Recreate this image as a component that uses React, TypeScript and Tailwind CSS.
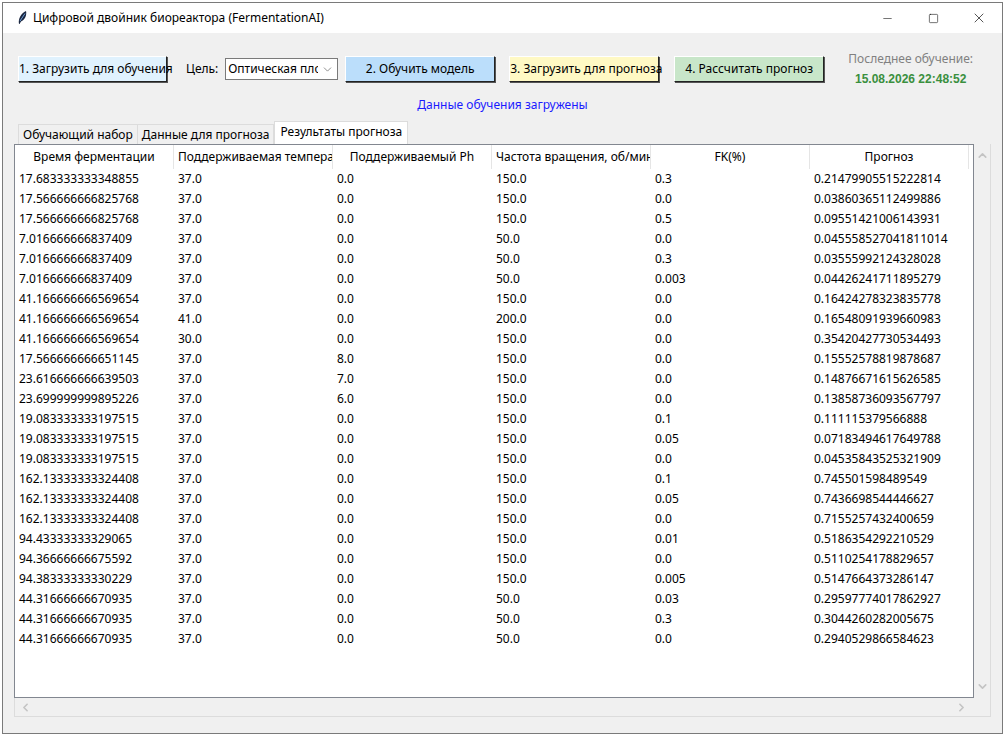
import { ChevronDown, ChevronLeft, ChevronRight, ChevronUp, Minus, Square, X } from "lucide-react";

const columns = [
  { title: "Время ферментации", pad: "justify-center" },
  { title: "Поддерживаемая температура", pad: "justify-start pl-[4px]" },
  { title: "Поддерживаемый Ph", pad: "justify-center" },
  { title: "Частота вращения, об/мин", pad: "justify-start pl-[4px]" },
  { title: "FK(%)", pad: "justify-center" },
  { title: "Прогноз", pad: "justify-center" },
];

const rows = [
  ["17.683333333348855", "37.0", "0.0", "150.0", "0.3", "0.21479905515222814"],
  ["17.566666666825768", "37.0", "0.0", "150.0", "0.0", "0.03860365112499886"],
  ["17.566666666825768", "37.0", "0.0", "150.0", "0.5", "0.09551421006143931"],
  ["7.016666666837409", "37.0", "0.0", "50.0", "0.0", "0.045558527041811014"],
  ["7.016666666837409", "37.0", "0.0", "50.0", "0.3", "0.03555992124328028"],
  ["7.016666666837409", "37.0", "0.0", "50.0", "0.003", "0.04426241711895279"],
  ["41.166666666569654", "37.0", "0.0", "150.0", "0.0", "0.16424278323835778"],
  ["41.166666666569654", "41.0", "0.0", "200.0", "0.0", "0.16548091939660983"],
  ["41.166666666569654", "30.0", "0.0", "150.0", "0.0", "0.35420427730534493"],
  ["17.566666666651145", "37.0", "8.0", "150.0", "0.0", "0.15552578819878687"],
  ["23.616666666639503", "37.0", "7.0", "150.0", "0.0", "0.14876671615626585"],
  ["23.699999999895226", "37.0", "6.0", "150.0", "0.0", "0.13858736093567797"],
  ["19.083333333197515", "37.0", "0.0", "150.0", "0.1", "0.111115379566888"],
  ["19.083333333197515", "37.0", "0.0", "150.0", "0.05", "0.07183494617649788"],
  ["19.083333333197515", "37.0", "0.0", "150.0", "0.0", "0.04535843525321909"],
  ["162.13333333324408", "37.0", "0.0", "150.0", "0.1", "0.745501598489549"],
  ["162.13333333324408", "37.0", "0.0", "150.0", "0.05", "0.7436698544446627"],
  ["162.13333333324408", "37.0", "0.0", "150.0", "0.0", "0.7155257432400659"],
  ["94.43333333329065", "37.0", "0.0", "150.0", "0.01", "0.5186354292210529"],
  ["94.36666666675592", "37.0", "0.0", "150.0", "0.0", "0.5110254178829657"],
  ["94.38333333330229", "37.0", "0.0", "150.0", "0.005", "0.5147664373286147"],
  ["44.31666666670935", "37.0", "0.0", "50.0", "0.03", "0.29597774017862927"],
  ["44.31666666670935", "37.0", "0.0", "50.0", "0.3", "0.3044260282005675"],
  ["44.31666666670935", "37.0", "0.0", "50.0", "0.0", "0.2940529866584623"],
];

const ActionButton = ({ label, color, width }: { label: string; color: string; width: string }) => (
  <button
    className={`${color} ${width} h-[26px] shrink-0 whitespace-nowrap border border-t-white border-l-white border-r-[#222] border-b-[#222] shadow-[1px_1px_0_#555] text-center text-[12px] text-black`}
  >
    {label}
  </button>
);

const Feather = () => (
  <svg width="16" height="16" viewBox="0 0 16 16" className="shrink-0">
    <path d="M5 14 C4 9 7 3 12 1 C13 5 11 10 7 11.5 L5.5 14 Z" fill="#1c2740" />
    <path d="M6 11 L11 3.5" stroke="#6fa0d8" strokeWidth="1" fill="none" />
  </svg>
);

const App = () => {
  return (
    <div className="w-[1007px] h-[737px] overflow-hidden bg-white pt-[2px] pl-[2px] font-['Noto_Sans','Open_Sans',sans-serif] text-[12px] text-black">
      <div className="w-[1001px] h-[732px] flex flex-col border border-[#7a7a7a] bg-[#f0f0f0]">
        {/* title bar */}
        <div className="h-[30px] shrink-0 flex items-center bg-white pl-[11px]">
          <Feather />
          <span className="ml-[3px] text-[12px]">Цифровой двойник биореактора (FermentationAI)</span>
          <div className="ml-auto flex items-center h-full">
            <div className="w-[46px] flex justify-center"><Minus size={13} strokeWidth={1} /></div>
            <div className="w-[46px] flex justify-center"><Square size={11} strokeWidth={1.2} /></div>
            <div className="w-[46px] flex justify-center"><X size={16} strokeWidth={1} /></div>
          </div>
        </div>

        {/* toolbar */}
        <div className="h-[58px] shrink-0 flex pl-[15px]">
          <div className="flex items-center h-[26px] mt-[23px]">
            <ActionButton label="1. Загрузить для обучения" color="bg-[#e0f2fe]" width="w-[149px]" />
            <span className="ml-[19px]">Цель:</span>
            <div className="ml-[7px] w-[113px] h-[22px] flex items-center border border-[#7a7a7a] bg-white pl-[2px] overflow-hidden">
              <span className="w-[90px] overflow-hidden whitespace-nowrap">Оптическая плотность</span>
              <ChevronDown size={13} strokeWidth={1.2} className="ml-[3px] text-[#555]" />
            </div>
            <div className="ml-[7px]"><ActionButton label="2. Обучить модель" color="bg-[#bbdefb]" width="w-[150px]" /></div>
            <div className="ml-[14px]"><ActionButton label="3. Загрузить для прогноза" color="bg-[#fff9c4]" width="w-[150px]" /></div>
            <div className="ml-[15px]"><ActionButton label="4. Рассчитать прогноз" color="bg-[#c8e6c9]" width="w-[150px]" /></div>
          </div>
          <div className="ml-[24px] mt-[18px] w-[125px] flex flex-col items-center">
            <span className="text-[#808080] leading-[16px]">Последнее обучение:</span>
            <span className="mt-[4px] font-['Liberation_Sans',sans-serif] font-bold text-[12px] leading-[16px] text-[#3a8f3e]">15.08.2026 22:48:52</span>
          </div>
        </div>

        {/* status */}
        <div className="h-[30px] shrink-0 flex justify-center items-center">
          <span className="text-[#1a1aff] -mt-[3px]">Данные обучения загружены</span>
        </div>

        {/* tabs */}
        <div className="h-[23px] shrink-0 flex items-end pl-[15px]">
          <div className="h-[20px] px-[4px] flex items-center border border-b-0 border-[#dcdcdc] bg-[#f0f0f0]">Обучающий набор</div>
          <div className="h-[20px] px-[4px] flex items-center border border-l-0 border-b-0 border-[#dcdcdc] bg-[#f0f0f0]">Данные для прогноза</div>
          <div className="h-[23px] px-[5px] pb-[3px] flex items-center border border-b-0 border-[#dcdcdc] bg-white">Результаты прогноза</div>
        </div>

        {/* table + scrollbars */}
        <div className="ml-[11px] w-[977px] h-[573px] border border-[#dcdcdc] border-t-0 flex flex-col">
          <div className="flex h-[554px] shrink-0">
            <div className="w-[960px] -ml-px h-full border border-[#828790] bg-white overflow-hidden">
              <div className="flex h-[24px]">
                {columns.map((col) => (
                  <div key={col.title} className={`${col.pad} w-[159px] shrink-0 flex items-center overflow-hidden whitespace-nowrap border-r border-[#e5e5e5]`}>
                    {col.title}
                  </div>
                ))}
              </div>
              <div className="pt-[0px]">
                {rows.map((row, i) => (
                  <div key={i} className="flex h-[20px] items-center">
                    {row.map((cell, j) => (
                      <div key={j} className="w-[159px] shrink-0 pl-[4px] whitespace-nowrap">{cell}</div>
                    ))}
                  </div>
                ))}
              </div>
            </div>
            <div className="flex-1 flex flex-col items-center justify-between py-[5px] text-[#c4c4c4]">
              <ChevronUp size={13} strokeWidth={3} />
              <ChevronDown size={13} strokeWidth={3} />
            </div>
          </div>
          <div className="flex-1 flex items-center justify-between pl-[4px] pr-[22px] text-[#c4c4c4]">
            <ChevronLeft size={13} strokeWidth={3} />
            <ChevronRight size={13} strokeWidth={3} />
          </div>
        </div>
      </div>
    </div>
  );
};

export default App;
